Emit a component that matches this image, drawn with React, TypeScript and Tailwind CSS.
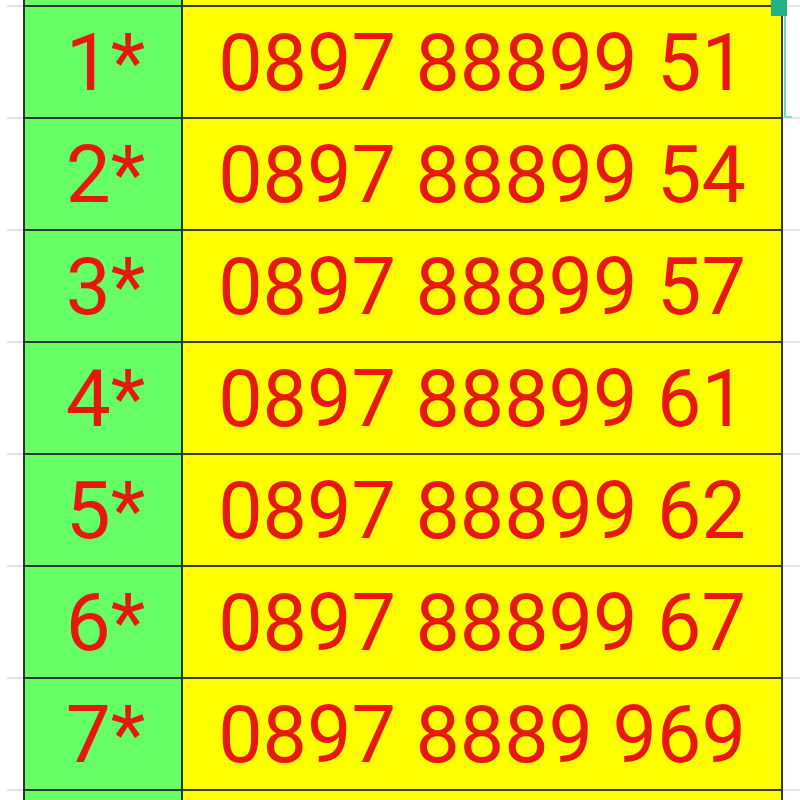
const rows = [
  { label: "1*", phone: "0897 88899 51" },
  { label: "2*", phone: "0897 88899 54" },
  { label: "3*", phone: "0897 88899 57" },
  { label: "4*", phone: "0897 88899 61" },
  { label: "5*", phone: "0897 88899 62" },
  { label: "6*", phone: "0897 88899 67" },
  { label: "7*", phone: "0897 8889 969" },
];

const Row = ({ label, phone, h, top = true }: any) => (
  <div className={`flex ${h}`}>
    {/* row header strip */}
    <div className="w-[23px] shrink-0 flex flex-col">
      <div className={`ml-[7px] ${top ? "border-t-2 border-[#e2e2e2]" : ""}`} />
    </div>
    <div
      className={`w-[160px] shrink-0 bg-[#66ff66] border-l-2 border-r-2 border-[#2a352a] flex items-center justify-center ${
        top ? "border-t-2" : ""
      }`}
    >
      <span className="text-[80px] leading-none text-[#e8180f] pl-[5px] pt-[2px]">{label}</span>
    </div>
    <div
      className={`w-[600px] shrink-0 bg-[#ffff00] border-r-2 border-[#35352a] flex items-center justify-center ${
        top ? "border-t-2" : ""
      }`}
    >
      <span className="text-[79px] leading-none text-[#e8180f] pt-[2px]">{phone}</span>
    </div>
    <div className="flex-1 flex flex-col">
      <div className={top ? "border-t-2 border-[#e6e6e6]" : ""} />
    </div>
  </div>
);

export default function App() {
  return (
    <div
      className="relative w-[800px] h-[800px] bg-white overflow-hidden"
      style={{ fontFamily: "Roboto, 'Liberation Sans', sans-serif" }}
    >
      <div className="flex flex-col">
        <Row label="" phone="" h="h-[5px]" top={false} />
        {rows.map((r) => (
          <Row key={r.label} label={r.label} phone={r.phone} h="h-[112px]" />
        ))}
        <Row label="" phone="" h="h-[40px]" />
      </div>

      {/* selection handle */}
      <div className="absolute left-[771px] top-0 w-[16px] h-[16px] bg-[#21b285]" />
      <div className="absolute left-[784px] top-[16px] w-[2px] h-[101px] bg-[#6fd8bf]" />
      <div className="absolute left-[784px] top-[116px] w-[8px] h-[2px] bg-[#8adccb]" />
    </div>
  );
}
